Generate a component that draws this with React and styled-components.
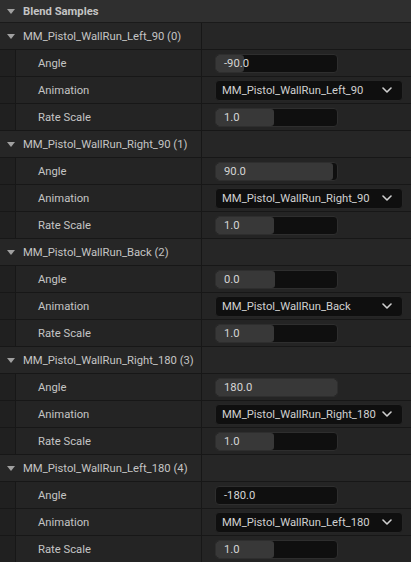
import React from "react";
import styled, { createGlobalStyle } from "styled-components";

const Global = createGlobalStyle`
  html, body { margin: 0; padding: 0; background: #1a1a1a; }
  body { font-family: Roboto, "Noto Sans", "Liberation Sans", sans-serif; font-size: 11.25px; color: #c0c0c0; }
  * { box-sizing: border-box; }
`;

const Panel = styled.div`
  width: 411px;
  height: 562px;
  overflow: hidden;
  display: flex;
  flex-direction: column;
  background: #151515;
`;

const CategoryHeader = styled.div`
  height: 23px;
  flex: none;
  display: flex;
  align-items: center;
  gap: 8px;
  padding-left: 7px;
  background: #2f2f2f;
  border-bottom: 1px solid #1a1a1a;
  font-weight: 700;
  color: #c4c4c4;
`;

const Arrow = styled.span`
  width: 0;
  height: 0;
  border-left: 4.5px solid transparent;
  border-right: 4.5px solid transparent;
  border-top: 5px solid #a0a0a0;
  flex: none;
  margin-top: 1px;
`;

const Row = styled.div`
  height: 27px;
  flex: none;
  display: grid;
  grid-template-columns: 202px 1fr;
  border-bottom: 1px solid #171717;
  background: ${(p) => (p.$header ? "#262626" : "#242424")};
`;

const NameCell = styled.div`
  display: flex;
  align-items: center;
  border-right: 1px solid #171717;
  min-width: 0;
`;

const GroupName = styled.div`
  display: flex;
  align-items: center;
  gap: 8px;
  padding-left: 7px;
  color: #c4c4c4;
  white-space: nowrap;
`;

const Indent = styled.div`
  width: 16px;
  align-self: stretch;
  background: #202020;
  border-right: 1px solid #171717;
  flex: none;
`;

const Label = styled.div`
  padding-left: 22px;
  color: #c4c4c4;
`;

const ValueCell = styled.div`
  display: flex;
  align-items: center;
  padding-left: 13px;
  padding-right: 7px;
`;

const NumberBox = styled.div`
  position: relative;
  width: 123px;
  height: 19px;
  border-radius: 4px;
  background: #0f0f0f;
  border: 1px solid #2e2e2e;
  overflow: hidden;
  display: flex;
  align-items: center;
`;

const Fill = styled.div`
  position: absolute;
  left: 0;
  top: 0;
  bottom: 0;
  background: #383838;
  border-radius: 3px;
`;

const NumberText = styled.span`
  position: relative;
  padding-left: 8px;
  color: #d4d4d4;
`;

const Dropdown = styled.div`
  width: 188px;
  height: 21px;
  border-radius: 4px;
  background: #0f0f0f;
  border: 1px solid #262626;
  display: flex;
  align-items: center;
  justify-content: space-between;
  padding-left: 6px;
  padding-right: 10px;
  color: #d0d0d0;
  white-space: nowrap;
`;

const Chevron = () => (
  <svg width="10" height="6" viewBox="0 0 10 6" style={{ flex: "none" }}>
    <path d="M1 1 L5 5 L9 1" fill="none" stroke="#d0d0d0" strokeWidth="1.6" strokeLinecap="round" strokeLinejoin="round" />
  </svg>
);

const NumberField = ({ value, ratio }) => (
  <NumberBox>
    <Fill style={{ width: `${ratio * 100}%` }} />
    <NumberText>{value}</NumberText>
  </NumberBox>
);

const samples = [
  { name: "MM_Pistol_WallRun_Left_90", angle: "-90.0", fill: 0.23 },
  { name: "MM_Pistol_WallRun_Right_90", angle: "90.0", fill: 0.97 },
  { name: "MM_Pistol_WallRun_Back", angle: "0.0", fill: 0.49 },
  { name: "MM_Pistol_WallRun_Right_180", angle: "180.0", fill: 1 },
  { name: "MM_Pistol_WallRun_Left_180", angle: "-180.0", fill: 0 },
];

const PropRow = ({ label, children }) => (
  <Row>
    <NameCell>
      <Indent />
      <Label>{label}</Label>
    </NameCell>
    <ValueCell>{children}</ValueCell>
  </Row>
);

export default function App() {
  return (
    <>
      <Global />
      <Panel>
        <CategoryHeader>
          <Arrow />
          Blend Samples
        </CategoryHeader>
        {samples.map((s, i) => (
          <React.Fragment key={s.name}>
            <Row $header>
              <NameCell>
                <GroupName>
                  <Arrow />
                  {s.name} ({i})
                </GroupName>
              </NameCell>
              <ValueCell />
            </Row>
            <PropRow label="Angle">
              <NumberField value={s.angle} ratio={s.fill} />
            </PropRow>
            <PropRow label="Animation">
              <Dropdown>
                <span>{s.name}</span>
                <Chevron />
              </Dropdown>
            </PropRow>
            <PropRow label="Rate Scale">
              <NumberField value="1.0" ratio={0.48} />
            </PropRow>
          </React.Fragment>
        ))}
      </Panel>
    </>
  );
}
